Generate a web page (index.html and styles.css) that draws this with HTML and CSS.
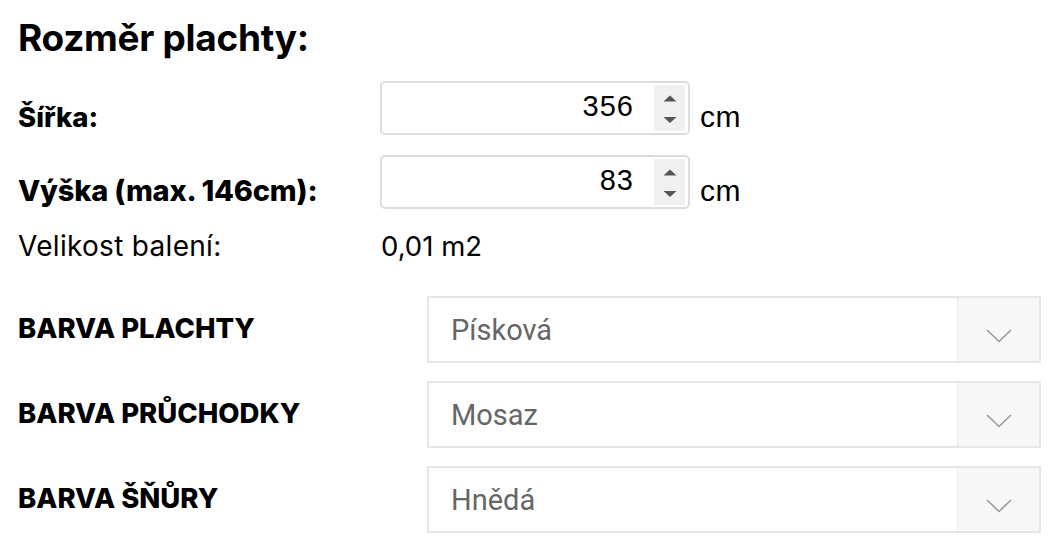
FILE: index.html
```html
<!DOCTYPE html>
<html lang="cs">
<head>
<meta charset="utf-8">
<title>Rozměr plachty</title>
<link rel="stylesheet" href="styles.css">
</head>
<body>
<div class="form">
  <h2 class="title">Rozměr plachty:</h2>
  <div class="dim-row row-w">
    <div class="dim-label">Šířka:</div>
    <div class="num-field">
      <span class="num-value">356</span>
      <span class="spinner">
        <svg width="14" height="46" viewBox="0 0 14 46"><path d="M0.5 16.5 L7 10.5 L13.5 16.5 Z" fill="#555"/><path d="M0.5 32 L13.5 32 L7 38 Z" fill="#555"/></svg>
      </span>
    </div>
    <span class="unit">cm</span>
  </div>
  <div class="dim-row row-h">
    <div class="dim-label">Výška (max. 146cm):</div>
    <div class="num-field">
      <span class="num-value">83</span>
      <span class="spinner">
        <svg width="14" height="46" viewBox="0 0 14 46"><path d="M0.5 16.5 L7 10.5 L13.5 16.5 Z" fill="#555"/><path d="M0.5 32 L13.5 32 L7 38 Z" fill="#555"/></svg>
      </span>
    </div>
    <span class="unit">cm</span>
  </div>
  <div class="info-row">
    <div class="info-label">Velikost balení:</div>
    <div class="info-value">0,01 m2</div>
  </div>
  <div class="opt-row">
    <div class="opt-label">BARVA PLACHTY</div>
    <div class="select">
      <span class="select-text">Písková</span>
      <span class="select-arrow"><svg width="26" height="14" viewBox="0 0 26 14"><path d="M1 1 L13 12.5 L25 1" fill="none" stroke="#9a9a9a" stroke-width="1.6"/></svg></span>
    </div>
  </div>
  <div class="opt-row">
    <div class="opt-label">BARVA PRŮCHODKY</div>
    <div class="select">
      <span class="select-text">Mosaz</span>
      <span class="select-arrow"><svg width="26" height="14" viewBox="0 0 26 14"><path d="M1 1 L13 12.5 L25 1" fill="none" stroke="#9a9a9a" stroke-width="1.6"/></svg></span>
    </div>
  </div>
  <div class="opt-row">
    <div class="opt-label">BARVA ŠŇŮRY</div>
    <div class="select">
      <span class="select-text">Hnědá</span>
      <span class="select-arrow"><svg width="26" height="14" viewBox="0 0 26 14"><path d="M1 1 L13 12.5 L25 1" fill="none" stroke="#9a9a9a" stroke-width="1.6"/></svg></span>
    </div>
  </div>
</div>
</body>
</html>
```
FILE: styles.css
```css
html, body {
  margin: 0;
  padding: 0;
  background: #fff;
}
body {
  font-family: "Inter", "DejaVu Sans", sans-serif;
  color: #000;
}
.form {
  padding: 16px 0 0 18px;
  display: flex;
  flex-direction: column;
}
.title {
  margin: 0;
  font-size: 37px;
  line-height: 44px;
  font-weight: 700;
  letter-spacing: -0.3px;
}
.dim-row {
  display: flex;
  align-items: flex-end;
}
.row-w { margin-top: 21px; }
.row-h { margin-top: 20px; }
.dim-label {
  width: 362px;
  font-size: 28px;
  font-weight: 800;
  line-height: 30px;
  padding-bottom: 3px;
}
.row-w .dim-label { font-size: 27.5px; }
.row-h .dim-label { font-size: 29px; letter-spacing: -0.2px; }
.num-field {
  box-sizing: border-box;
  width: 310px;
  height: 54px;
  border: 2px solid #dcdcdc;
  border-radius: 5px;
  display: flex;
  align-items: center;
  justify-content: flex-end;
  padding: 2px 3px 2px 0;
}
.num-value {
  font-family: "Liberation Sans", Arial, sans-serif;
  font-size: 29px;
  letter-spacing: 1px;
  margin-right: 20px;
  padding-bottom: 3px;
}
.spinner {
  width: 31px;
  height: 100%;
  background: #f0f0f0;
  display: flex;
  align-items: center;
  justify-content: center;
}
.unit {
  font-family: "Liberation Sans", Arial, sans-serif;
  font-size: 30px;
  letter-spacing: 0.6px;
  line-height: 30px;
  margin-left: 10px;
  padding-bottom: 3px;
}
.info-row {
  display: flex;
  margin-top: 22px;
  font-size: 28px;
  line-height: 30px;
  letter-spacing: 0.3px;
}
.info-label {
  width: 363px;
}
.info-value {
  letter-spacing: 0;
  font-size: 27.5px;
}
.opt-row {
  display: flex;
  align-items: center;
  height: 67px;
}
.info-row + .opt-row { margin-top: 35px; }
.opt-row + .opt-row { margin-top: 18px; }
.opt-label {
  width: 409px;
  font-size: 27.5px;
  font-weight: 800;
  padding-bottom: 3px;
}
.select {
  box-sizing: border-box;
  width: 614px;
  height: 67px;
  border: 2px solid #e6e6e6;
  display: flex;
  align-items: stretch;
}
.select-text {
  flex: 1;
  display: flex;
  align-items: center;
  padding-left: 22px;
  font-family: "Roboto", sans-serif;
  font-size: 29px;
  color: #666;
}
.select-arrow {
  width: 81px;
  border-left: 1px solid #ececec;
  background: #f7f7f7;
  display: flex;
  align-items: center;
  justify-content: center;
  padding-top: 12px;
}
```
